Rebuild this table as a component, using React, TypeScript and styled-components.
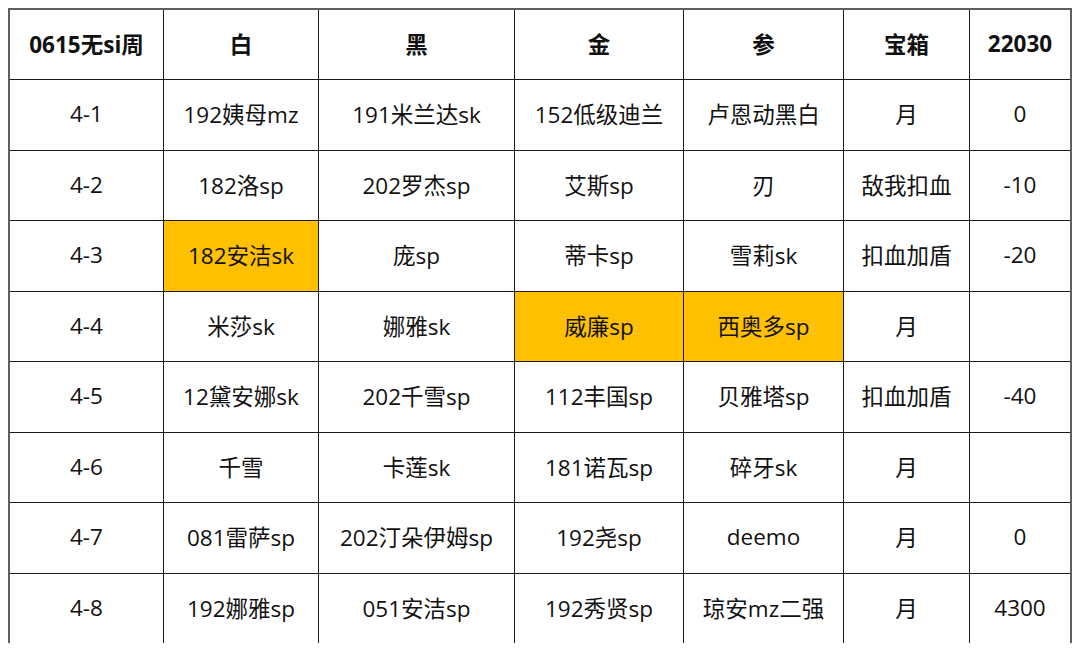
import styled, { createGlobalStyle } from "styled-components";

const GlobalStyle = createGlobalStyle`
  html, body {
    margin: 0;
    padding: 0;
    background: #fff;
  }
  body {
    font-family: "Open Sans", "Noto Sans CJK SC", sans-serif;
    color: #111;
  }
`;

const columns = [154, 155, 196, 169, 160, 126, 100];

const header = ["0615无si周", "白", "黑", "金", "参", "宝箱", "22030"];

const rows: string[][] = [
  ["4-1", "192姨母mz", "191米兰达sk", "152低级迪兰", "卢恩动黑白", "月", "0"],
  ["4-2", "182洛sp", "202罗杰sp", "艾斯sp", "刃", "敌我扣血", "-10"],
  ["4-3", "182安洁sk", "庞sp", "蒂卡sp", "雪莉sk", "扣血加盾", "-20"],
  ["4-4", "米莎sk", "娜雅sk", "威廉sp", "西奥多sp", "月", ""],
  ["4-5", "12黛安娜sk", "202千雪sp", "112丰国sp", "贝雅塔sp", "扣血加盾", "-40"],
  ["4-6", "千雪", "卡莲sk", "181诺瓦sp", "碎牙sk", "月", ""],
  ["4-7", "081雷萨sp", "202汀朵伊姆sp", "192尧sp", "deemo", "月", "0"],
  ["4-8", "192娜雅sp", "051安洁sp", "192秀贤sp", "琼安mz二强", "月", "4300"],
];

// cells marked in gold: "row-col"
const highlighted = new Set(["2-1", "3-3", "3-4"]);

function App() {
  return (
    <>
      <GlobalStyle />
      <Page>
        <Clip>
          <Table>
            {header.map((text, c) => (
              <Cell key={`h-${c}`} $head $last={c === columns.length - 1}>
                {text}
              </Cell>
            ))}
            {rows.map((row, r) =>
              row.map((text, c) => (
                <Cell
                  key={`${r}-${c}`}
                  $gold={highlighted.has(`${r}-${c}`)}
                  $last={c === columns.length - 1}
                >
                  {text}
                </Cell>
              ))
            )}
          </Table>
        </Clip>
      </Page>
    </>
  );
}

export default App;

const Page = styled.div`
  width: 1080px;
  height: 652px;
  padding: 8px 0 0 8px;
  box-sizing: border-box;
  background: #fff;
`;

const Clip = styled.div`
  height: 635px;
  overflow: hidden;
`;

const Table = styled.div`
  display: grid;
  grid-template-columns: ${columns.map((w) => `${w}px`).join(" ")};
  grid-template-rows: 70px;
  grid-auto-rows: 70.5px;
  width: max-content;
  border: 2px solid #5e5e5e;
`;

const Cell = styled.div<{ $head?: boolean; $gold?: boolean; $last?: boolean }>`
  display: flex;
  align-items: center;
  justify-content: center;
  box-sizing: border-box;
  border-right: ${(p) => (p.$last ? "none" : "1px solid #1a1a1a")};
  border-bottom: 1px solid #1a1a1a;
  background: ${(p) => (p.$gold ? "#ffc000" : "#fff")};
  font-size: 22.5px;
  font-weight: ${(p) => (p.$head ? 700 : 400)};
  white-space: nowrap;
  padding-bottom: 2px;
`;
